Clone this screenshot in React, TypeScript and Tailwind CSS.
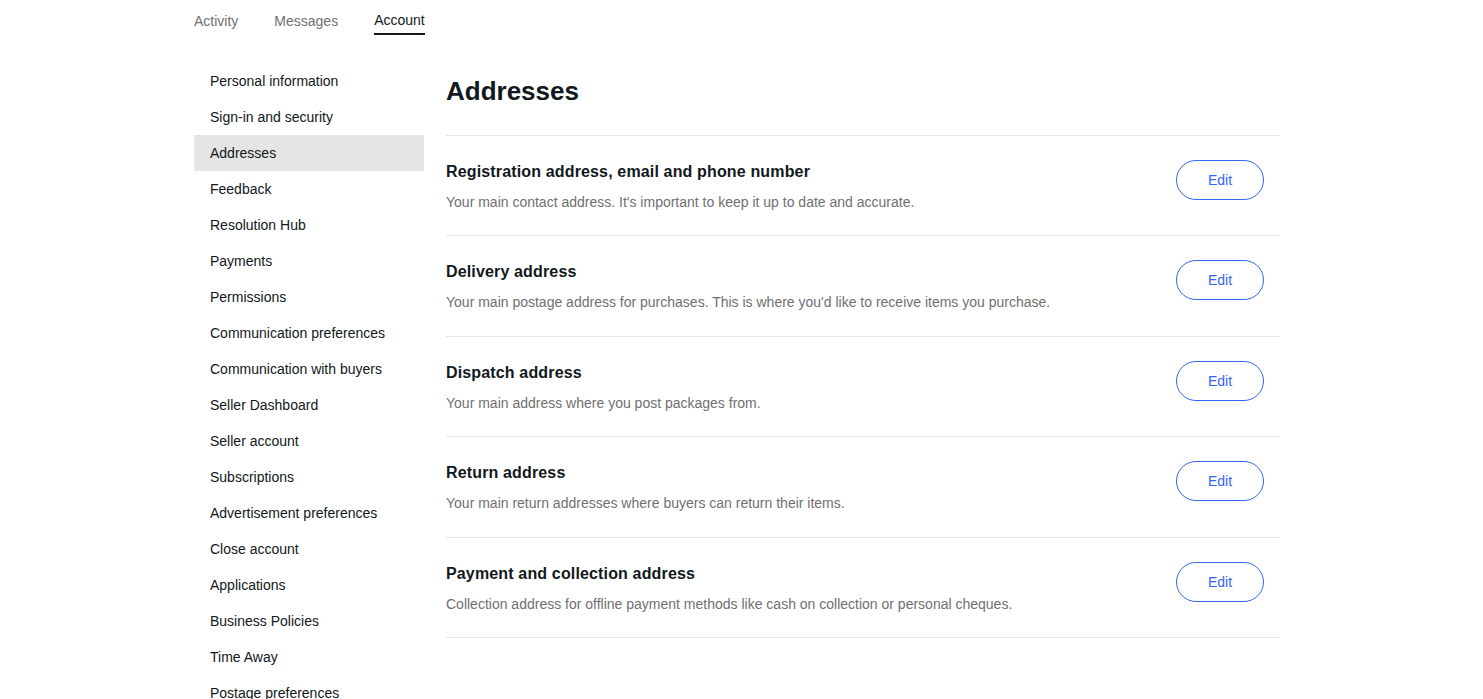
import React from "react";

const tabs = ["Activity", "Messages", "Account"];

const menuItems = [
  "Personal information",
  "Sign-in and security",
  "Addresses",
  "Feedback",
  "Resolution Hub",
  "Payments",
  "Permissions",
  "Communication preferences",
  "Communication with buyers",
  "Seller Dashboard",
  "Seller account",
  "Subscriptions",
  "Advertisement preferences",
  "Close account",
  "Applications",
  "Business Policies",
  "Time Away",
  "Postage preferences",
];

const sections = [
  {
    title: "Registration address, email and phone number",
    text: "Your main contact address. It's important to keep it up to date and accurate.",
  },
  {
    title: "Delivery address",
    text: "Your main postage address for purchases. This is where you'd like to receive items you purchase.",
  },
  {
    title: "Dispatch address",
    text: "Your main address where you post packages from.",
  },
  {
    title: "Return address",
    text: "Your main return addresses where buyers can return their items.",
  },
  {
    title: "Payment and collection address",
    text: "Collection address for offline payment methods like cash on collection or personal cheques.",
  },
];

export default function App() {
  return (
    <div className="min-h-screen bg-white text-[#111820] font-['Liberation_Sans',Arial,sans-serif]">
      {/* Top tabs */}
      <div className="pl-[194px] flex gap-9 h-[36px]">
        {tabs.map((tab) => (
          <button
            key={tab}
            className={
              tab === "Account"
                ? "h-[35px] pt-[6px] self-start text-sm leading-[18px] text-[#111820] border-b-2 border-[#111820]"
                : "h-[35px] pt-[6px] self-start text-sm leading-[18px] text-[#707070]"
            }
          >
            {tab}
          </button>
        ))}
      </div>

      <div className="pl-[194px] pt-[27px] flex gap-[22px]">
        {/* Sidebar */}
        <nav className="w-[230px] shrink-0 flex flex-col">
          {menuItems.map((item) => (
            <a
              key={item}
              className={
                item === "Addresses"
                  ? "h-9 flex items-center pl-4 text-sm bg-[#e5e5e5] text-[#111820]"
                  : "h-9 flex items-center pl-4 text-sm text-[#111820]"
              }
            >
              {item}
            </a>
          ))}
        </nav>

        {/* Main content */}
        <main className="w-[834px]">
          <h1 className="text-[26px] leading-9 font-bold mt-[10px] mb-[26px]">Addresses</h1>
          <div className="border-t border-[#e5e5e5]">
            {sections.map((s) => (
              <div
                key={s.title}
                className="flex items-start justify-between pt-6 pb-[23.4px] border-b border-[#e5e5e5]"
              >
                <div>
                  <h2 className="text-base leading-6 font-bold tracking-[0.15px]">{s.title}</h2>
                  <p className="mt-2 text-sm leading-5 text-[#707070]">{s.text}</p>
                </div>
                <button className="mr-4 w-[88px] h-10 rounded-full border border-[#3665f3] text-sm text-[#3665f3] bg-white">
                  Edit
                </button>
              </div>
            ))}
          </div>
        </main>
      </div>
    </div>
  );
}
